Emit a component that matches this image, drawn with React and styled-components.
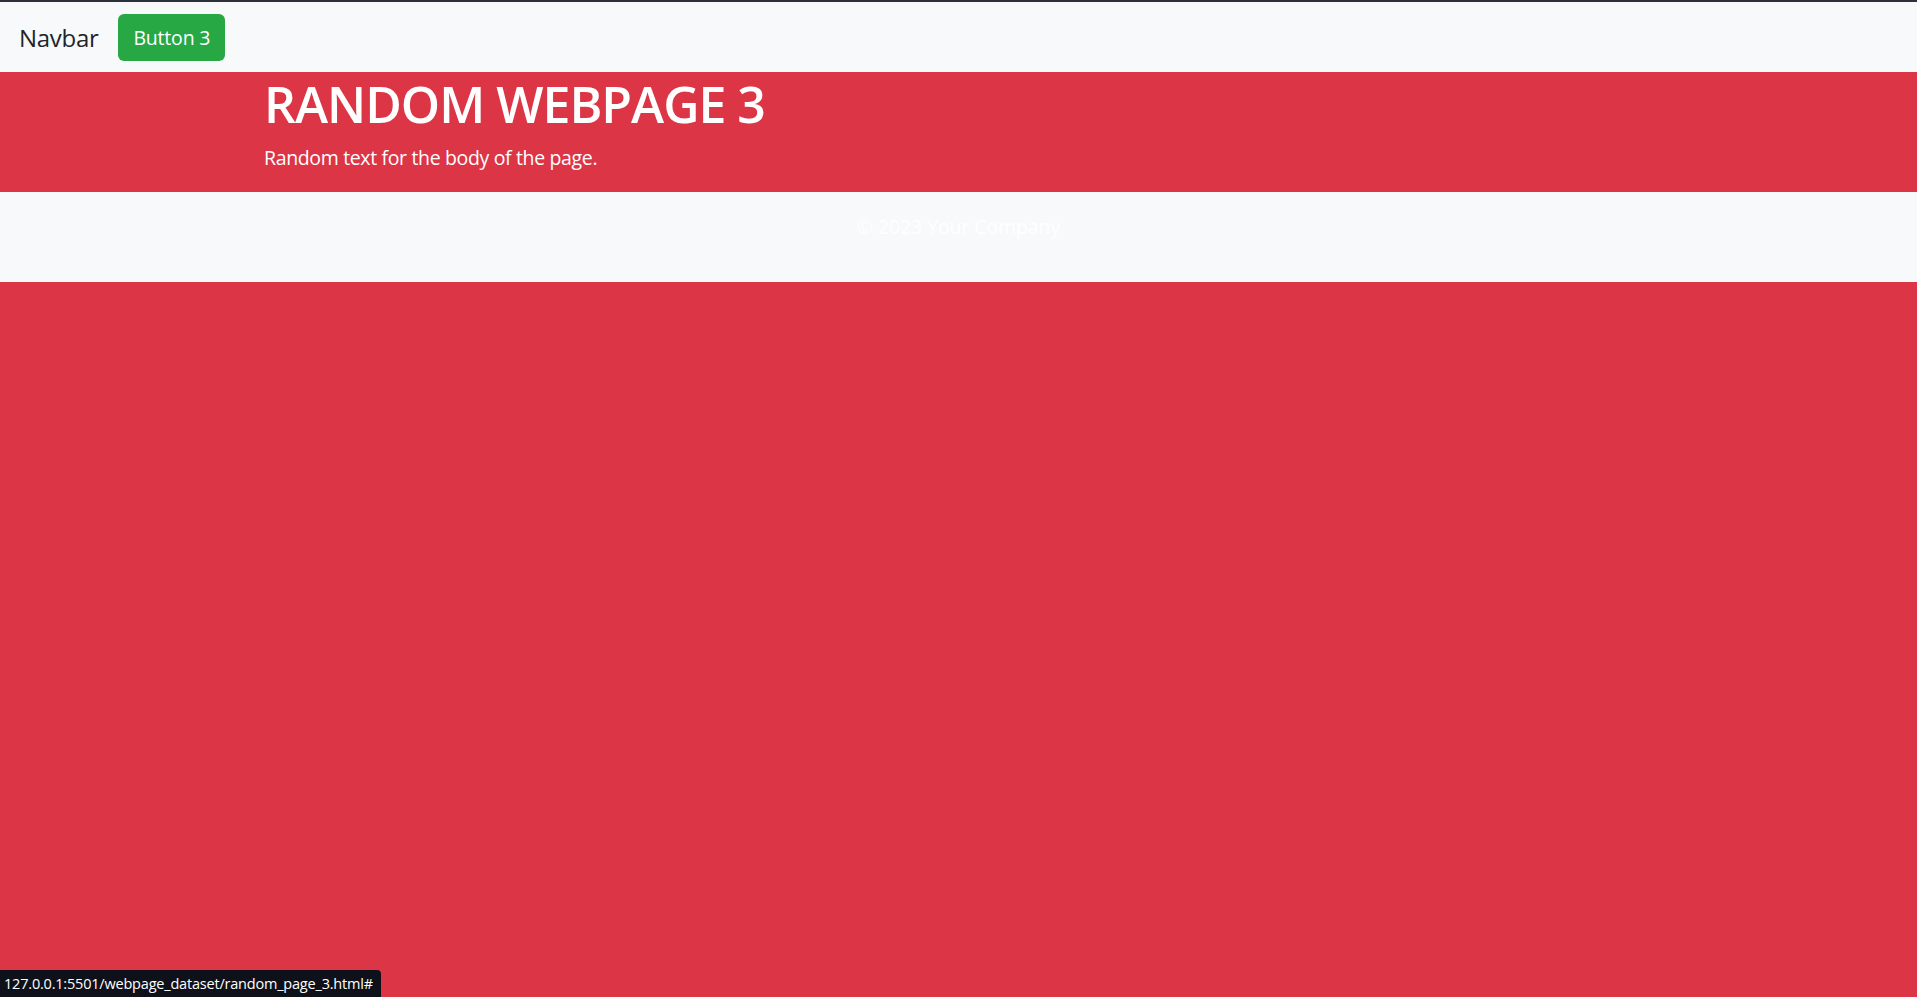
import styled, { createGlobalStyle } from 'styled-components';

const GlobalStyle = createGlobalStyle`
  html, body {
    margin: 0;
    padding: 0;
    background-color: #dc3545;
    font-family: "Open Sans", "Noto Sans", sans-serif;
  }
  * { box-sizing: border-box; }
`;

const Page = styled.div`
  min-height: 100vh;
  border-top: 2px solid #2c303a;
  background-color: #dc3545;
`;

const Navbar = styled.nav`
  display: flex;
  align-items: center;
  gap: 20px;
  height: 70px;
  padding: 0 19px;
  background-color: #f8f9fa;
`;

const Brand = styled.a`
  font-size: 24px;
  color: #212529;
  text-decoration: none;
  letter-spacing: -0.3px;
`;

const Button = styled.button`
  height: 47px;
  padding: 0 15px;
  border: none;
  border-radius: 6px;
  background-color: #28a745;
  color: #fff;
  font-family: inherit;
  font-size: 19.5px;
  letter-spacing: -0.2px;
`;

const Hero = styled.header`
  height: 120px;
  background-color: #dc3545;
  color: #fff;
`;

const Container = styled.div`
  width: 1425px;
  margin: 0 auto;
  padding: 0 18px;
`;

const Title = styled.h1`
  margin: 0;
  padding-top: 2px;
  font-size: 50px;
  font-weight: 600;
  line-height: 60px;
  letter-spacing: -1px;
`;

const Lead = styled.p`
  margin: 9px 0 0;
  font-size: 19.5px;
  line-height: 30px;
  letter-spacing: -0.35px;
`;

const Footer = styled.footer`
  padding: 20px 0;
  background-color: #f8f9fa;
  color: #fff;
  text-align: center;
`;

const FooterText = styled.p`
  margin: 0 0 20px;
  font-size: 19.5px;
  line-height: 30px;
  letter-spacing: -0.1px;
`;

const StatusBar = styled.div`
  position: fixed;
  left: 0;
  bottom: 0;
  height: 27px;
  padding: 0 8px 0 4px;
  display: flex;
  align-items: center;
  background-color: #0f111a;
  border-top-right-radius: 4px;
  color: #fff;
  font-size: 14.5px;
  letter-spacing: -0.2px;
`;

export default function App() {
  return (
    <Page>
      <GlobalStyle />
      <Navbar>
        <Brand href="#">Navbar</Brand>
        <Button>Button 3</Button>
      </Navbar>
      <Hero>
        <Container>
          <Title>RANDOM WEBPAGE 3</Title>
          <Lead>Random text for the body of the page.</Lead>
        </Container>
      </Hero>
      <Footer>
        <FooterText>© 2023 Your Company</FooterText>
      </Footer>
      <StatusBar>127.0.0.1:5501/webpage_dataset/random_page_3.html#</StatusBar>
    </Page>
  );
}
